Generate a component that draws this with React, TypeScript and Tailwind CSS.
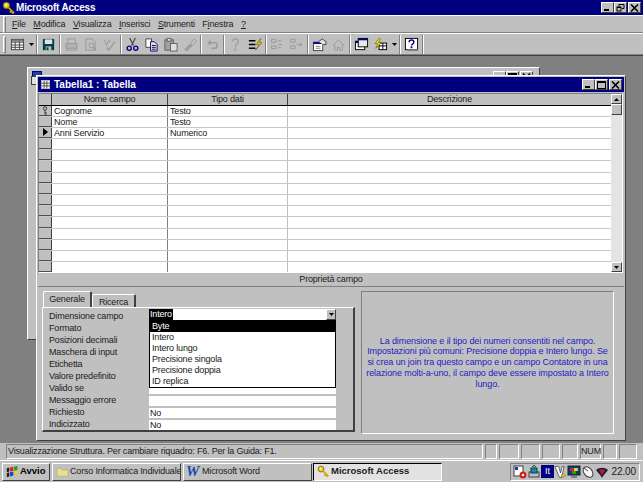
const font = "font-['Liberation_Sans',Arial,sans-serif]";

const raised = "border border-t-white border-l-white border-r-[#404040] border-b-[#404040]";
const sunken = "border border-t-[#808080] border-l-[#808080] border-r-white border-b-white";
const body = "text-[9px] tracking-[-0.18px] text-[#202020]";

function Key({ className = "w-4 h-4" }: { className?: string }) {
  return (
    <svg viewBox="0 0 16 16" className={className}>
      <circle cx="5" cy="5" r="3.6" fill="#e8d020" stroke="#806000" strokeWidth="1" />
      <circle cx="4.5" cy="4.5" r="1" fill="#fff" />
      <path d="M7.5 7.5 L14 14 M11 11 l-2 2 M13 13 l-2 1" stroke="#c8a800" strokeWidth="2" fill="none" />
    </svg>
  );
}

function WinButtons({ restore }: { restore?: boolean }) {
  const box = `${raised} bg-[#c0c0c0] flex items-center justify-center w-[13px] h-[11px]`;
  return (
    <div className="flex items-center">
      <div className={box}>
        <svg viewBox="0 0 9 7" className="w-[9px] h-[7px]"><rect x="1" y="5" width="5" height="2" fill="#000" /></svg>
      </div>
      <div className={box}>
        {restore ? (
          <svg viewBox="0 0 9 8" className="w-[9px] h-[8px]" fill="none" stroke="#000">
            <path d="M3 2.500V.5h5v4H6" /><rect x="1" y="3" width="4" height="4" />
            <path d="M1 3.500h4" />
          </svg>
        ) : (
          <svg viewBox="0 0 9 8" className="w-[9px] h-[8px]" fill="none" stroke="#000">
            <rect x=".5" y=".5" width="8" height="7" /><path d="M0 1.500h9" />
          </svg>
        )}
      </div>
      <div className={`${box} ml-[1px]`}>
        <svg viewBox="0 0 9 8" className="w-[9px] h-[8px]" stroke="#000" strokeWidth="1.6"><path d="M1 .5l7 7M8 .5l-7 7" /></svg>
      </div>
    </div>
  );
}

function Sep() {
  return <div className="w-[2px] h-[19px] mx-[1px] shrink-0 border-l border-l-[#808080] border-r border-r-white" />;
}

function Tool({ children, w = "w-[19px]" }: { children: React.ReactNode; w?: string }) {
  return <div className={`${w} h-[19px] flex items-center justify-center shrink-0`}>{children}</div>;
}

function Ico({ children }: { children: React.ReactNode }) {
  return <svg viewBox="0 0 16 16" className="w-[15px] h-[15px]">{children}</svg>;
}

function Caret() {
  return (
    <svg viewBox="0 0 5 3" className="w-[5px] h-[3px]"><path d="M0 0h5L2.500 3z" fill="#000" /></svg>
  );
}

function Grip() {
  return <div className="w-[3px] h-[17px] ml-[1px] mr-[1px] shrink-0 border border-t-white border-l-white border-r-[#808080] border-b-[#808080]" />;
}

function Toolbar() {
  const off = "#989898";
  return (
    <div className="h-[22px] shrink-0 bg-[#c0c0c0] flex items-center pl-[2px] border-b border-b-[#808080] border-t border-t-white">
      <Grip />
      <Tool w="w-[20px]">
        <Ico>
          <rect x="1.500" y="2.500" width="13" height="11" fill="#fff" stroke="#404040" />
          <path d="M1.500 5.500h13M1.500 8.500h13M1.500 11h13M5.500 3v10M10 3v10" stroke="#404040" />
          <rect x="2" y="3" width="12" height="2" fill="#808080" />
        </Ico>
      </Tool>
      <Tool w="w-[8px]"><Caret /></Tool>
      <Sep />
      <Tool>
        <Ico>
          <rect x="2" y="2" width="12" height="12" fill="#004040" />
          <rect x="4" y="2.500" width="8" height="5" fill="#e0e0e0" />
          <rect x="5" y="10" width="6" height="4" fill="#c0c0c0" />
          <rect x="6" y="11" width="2" height="3" fill="#004040" />
        </Ico>
      </Tool>
      <Sep />
      <Tool>
        <Ico>
          <path d="M4 7V2h8v5" fill="none" stroke={off} />
          <path d="M2 7h12v5H2z" fill="#b0b0b0" stroke={off} />
          <path d="M4 12l-1 2h10l-1-2" fill="none" stroke={off} />
        </Ico>
      </Tool>
      <Tool>
        <Ico>
          <path d="M3 2h7l3 3v9H3z" fill="none" stroke={off} />
          <circle cx="9" cy="9" r="2.500" fill="none" stroke={off} />
          <path d="M11 11l3 3" stroke={off} strokeWidth="1.500" />
        </Ico>
      </Tool>
      <Tool>
        <Ico>
          <path d="M2 3l3 6 2-6M9 3l-1 3" fill="none" stroke={off} />
          <path d="M5 11l2 3 7-9" fill="none" stroke={off} strokeWidth="1.500" />
        </Ico>
      </Tool>
      <Sep />
      <Tool>
        <Ico>
          <path d="M5 1l4 8M11 1L7 9" stroke="#404040" fill="none" strokeWidth="1.200" />
          <circle cx="4.500" cy="12" r="2.200" fill="none" stroke="#000080" strokeWidth="1.400" />
          <circle cx="11.500" cy="12" r="2.200" fill="none" stroke="#000080" strokeWidth="1.400" />
        </Ico>
      </Tool>
      <Tool>
        <Ico>
          <path d="M2 2h6v9H2z" fill="#fff" stroke="#404040" />
          <path d="M7 5h4l3 3v7H7z" fill="#e8e8c8" stroke="#000080" />
          <path d="M8.500 9h4M8.500 11h4M8.500 13h4" stroke="#000080" />
        </Ico>
      </Tool>
      <Tool>
        <Ico>
          <rect x="2" y="3" width="9" height="11" fill="#a0a0a0" stroke="#606060" />
          <rect x="4.500" y="1.500" width="4" height="3" fill="#e0e0e0" stroke="#606060" />
          <rect x="8" y="7" width="7" height="8" fill="#e0e0e0" stroke="#606060" />
        </Ico>
      </Tool>
      <Tool>
        <Ico>
          <path d="M3 13l6-6 2 2-6 6z" fill="#a0a0a0" stroke={off} />
          <path d="M9 7l4-5 2 2-4 5z" fill="#c8c8c8" stroke={off} />
        </Ico>
      </Tool>
      <Sep />
      <Tool>
        <Ico>
          <path d="M4 6h6a3 3 0 0 1 0 6H7" fill="none" stroke={off} strokeWidth="1.500" />
          <path d="M6 3L2.500 6 6 9z" fill={off} />
        </Ico>
      </Tool>
      <Sep />
      <Tool>
        <Ico>
          <path d="M5 5a3 3 0 1 1 5 2l-2 2v2" fill="none" stroke={off} strokeWidth="1.300" />
          <rect x="7" y="12.500" width="2" height="2" fill={off} />
        </Ico>
      </Tool>
      <Tool>
        <Ico>
          <path d="M2 4h7M2 8h7M2 12h7" stroke="#000" strokeWidth="1.400" />
          <path d="M14 2l-4 6h3l-4 6 7-8h-3l2-4z" fill="#e0d000" stroke="#404000" strokeWidth=".5" />
        </Ico>
      </Tool>
      <Sep />
      <Tool>
        <Ico>
          <path d="M1.500 2.500h5v3h-5zM1.500 9.500h5v3h-5z" fill="none" stroke={off} />
          <path d="M9 4h3M9 8h4M9 11h3" stroke={off} />
        </Ico>
      </Tool>
      <Tool>
        <Ico>
          <path d="M1.500 2.500h5v3h-5zM1.500 9.500h5v3h-5z" fill="none" stroke={off} />
          <path d="M8 8h5M11 6l3 2-3 2" stroke={off} fill="none" />
        </Ico>
      </Tool>
      <Sep />
      <Tool>
        <Ico>
          <rect x="1.500" y="5.500" width="10" height="9" fill="#fff" stroke="#404040" />
          <rect x="1.500" y="5.500" width="10" height="2" fill="#000080" />
          <path d="M7 5l4-3 4 3v3h-3" fill="#e0e0e0" stroke="#404040" />
          <path d="M4 10h5M4 12h5" stroke="#808080" />
        </Ico>
      </Tool>
      <Tool>
        <Ico>
          <path d="M2 9l6-6 6 6M4 8v6h3v-3h2v3h3V8" fill="none" stroke={off} />
        </Ico>
      </Tool>
      <Sep />
      <Tool>
        <Ico>
          <rect x="1.500" y="4.500" width="10" height="9" fill="#fff" stroke="#000" />
          <rect x="4.500" y="1.500" width="10" height="9" fill="#e8e8e8" stroke="#000" />
          <rect x="4.500" y="1.500" width="10" height="2" fill="#000080" />
          <rect x="1.500" y="4.500" width="3" height="2" fill="#000080" />
        </Ico>
      </Tool>
      <Tool>
        <Ico>
          <rect x="6.500" y="6.500" width="8" height="7" fill="#fff" stroke="#000" />
          <path d="M6.500 9.500h8M10.500 6.500v7" stroke="#000" />
          <path d="M7 1L2 7h3L3 12l6-6H6l2-4z" fill="#f0e000" stroke="#404000" strokeWidth=".5" />
        </Ico>
      </Tool>
      <Tool w="w-[8px]"><Caret /></Tool>
      <Sep />
      <Tool>
        <Ico>
          <rect x="1.500" y="1.500" width="13" height="12" fill="#fff" stroke="#000" />
          <rect x="3" y="13" width="12" height="2" fill="#808080" />
          <path d="M5.500 5.500c0-3 5-3 5 0 0 2-2.500 2-2.500 3.500" fill="none" stroke="#000080" strokeWidth="1.500" />
          <rect x="7" y="10" width="2" height="2" fill="#000080" />
        </Ico>
      </Tool>
      <Sep />
    </div>
  );
}

function u(text: string, i: number) {
  return (
    <>
      {text.slice(0, i)}
      <span className="underline">{text[i]}</span>
      {text.slice(i + 1)}
    </>
  );
}

const menus: [string, number][] = [
  ["File", 0], ["Modifica", 0], ["Visualizza", 0], ["Inserisci", 0], ["Strumenti", 0], ["Finestra", 1], ["?", 0],
];

const rows = [
  ["Cognome", "Testo"],
  ["Nome", "Testo"],
  ["Anni Servizio", "Numerico"],
  ...Array.from({ length: 12 }, () => ["", ""]),
];

const props = ["Dimensione campo", "Formato", "Posizioni decimali", "Maschera di input", "Etichetta", "Valore predefinito", "Valido se", "Messaggio errore", "Richiesto", "Indicizzato"];
const options = ["Byte", "Intero", "Intero lungo", "Precisione singola", "Precisione doppia", "ID replica"];

function ChildTitle() {
  return (
    <div className="h-[15px] bg-[#000080] flex items-center justify-between pl-[3px] pr-[2px] mb-[1px]">
      <div className="flex items-center gap-[4px]">
        <svg viewBox="0 0 10 10" className="w-[9px] h-[9px]">
          <rect x=".5" y=".5" width="9" height="9" fill="#fff" stroke="#c0c0c0" />
          <path d="M.5 3.500h9M.5 6.500h9M3.500 1v8M6.500 1v8" stroke="#404040" />
        </svg>
        <span className="text-white font-bold text-[10px]">Tabella1 : Tabella</span>
      </div>
      <WinButtons />
    </div>
  );
}

function ScrollBtn({ d }: { d: string }) {
  return (
    <div className={`${raised} h-[10px] bg-[#c0c0c0] flex items-center justify-center`}>
      <svg viewBox="0 0 5 3" className="w-[5px] h-[3px]"><path d={d} fill="#000" /></svg>
    </div>
  );
}

function DesignGrid() {
  return (
    <div className={`${sunken} mr-[1px] flex bg-white h-[180px] overflow-hidden border-t-[#404040] border-l-[#404040]`}>
      <div className="flex-1 min-w-0">
        <div className={`grid grid-cols-[13px_116px_120px_1fr] h-[11.5px] bg-[#c0c0c0] border-b border-b-black ${body} leading-[10px] text-center`}>
          <div className="border-r border-r-[#404040]" />
          <div className="border-r border-r-[#404040]">Nome campo</div>
          <div className="border-r border-r-[#404040]">Tipo dati</div>
          <div>Descrizione</div>
        </div>
        {rows.map((r, i) => (
          <div key={i} className={`grid grid-cols-[13px_116px_120px_1fr] h-[11.2px] border-b border-b-[#c8c8c8] ${body} leading-[10px]`}>
            <div className="bg-[#c0c0c0] border-r border-r-[#404040] border-b border-b-[#505050] flex items-center justify-center">
              {i === 0 && (
                <svg viewBox="0 0 7 10" className="w-[6px] h-[9px]" fill="none" stroke="#303030">
                  <circle cx="3.500" cy="2.500" r="2" /><path d="M3.500 4.500V9.500M3.500 7.500h2M3.500 9.500h2" />
                </svg>
              )}
              {i === 2 && <svg viewBox="0 0 5 8" className="w-[5px] h-[8px]"><path d="M0 0l5 4-5 4z" fill="#000" /></svg>}
            </div>
            <div className="pl-[2px] border-r border-r-[#808080]">{r[0]}</div>
            <div className="pl-[2px] border-r border-r-[#c0c0c0]">{r[1]}</div>
            <div />
          </div>
        ))}
      </div>
      <div className="w-[11px] shrink-0 bg-[#e4e4e4] flex flex-col justify-between">
        <div>
          <ScrollBtn d="M0 3h5L2.500 0z" />
          <div className={`${raised} h-[11px] bg-[#c0c0c0]`} />
        </div>
        <ScrollBtn d="M0 0h5L2.500 3z" />
      </div>
    </div>
  );
}

function PropertyTabs() {
  return (
    <div className="w-[313px] flex flex-col">
      <div className="flex items-end h-[15px] pl-[1px] relative z-10">
        <div className={`h-[16px] w-[49px] bg-[#c0c0c0] border-t border-l border-t-white border-l-white border-r-[2px] border-r-[#404040] rounded-t-[2px] text-center ${body} leading-[14px]`}>Generale</div>
        <div className={`h-[13px] w-[44px] bg-[#c0c0c0] border-t border-l border-t-white border-l-white border-r-[2px] border-r-[#404040] rounded-t-[2px] text-center ${body} leading-[14px]`}>Ricerca</div>
      </div>
      <div className={`${raised} border-r-[2px] border-b-[2px] h-[125px] pl-[6px] pt-[3px] relative`}>
        {props.map((p, i) => (
          <div key={p} className={`flex h-[12px] items-center ${body}`}>
            <div className="w-[100px] shrink-0 whitespace-nowrap">{p}</div>
            <div className="w-[187px] h-[10.5px] pl-[1px] leading-[10.5px] bg-white">
              {i >= 8 ? "No" : ""}
            </div>
          </div>
        ))}
        {/* menu a tendina aperto sopra le righe */}
        <div className="absolute left-[106px] top-[1px] w-[187px]">
          <div className={`h-[11px] bg-white flex justify-between ${body} leading-[11px]`}>
            <span className="bg-black text-white px-[1px]">Intero</span>
            <div className={`${raised} w-[10px] h-[11px] bg-[#c0c0c0] flex items-center justify-center`}><Caret /></div>
          </div>
          <div className={`border border-black bg-white ${body} h-[68px]`}>
            {options.map((o, i) => (
              <div key={o} className={`h-[11.100px] leading-[11px] pl-[2px] ${i === 0 ? "bg-black text-white" : ""}`}>{o}</div>
            ))}
          </div>
        </div>
      </div>
    </div>
  );
}

function HelpPanel() {
  return (
    <div className={`${sunken} w-[253px] h-[143px] -mt-[1px] flex items-center justify-center text-center text-[9px] tracking-[-0.1px] leading-[10.7px] text-[#1c1cc8] whitespace-nowrap`}>
      <p>
        La dimensione e il tipo dei numeri consentiti nel campo.<br />
        Impostazioni più comuni: Precisione doppia e Intero lungo. Se<br />
        si crea un join tra questo campo e un campo Contatore in una<br />
        relazione molti-a-uno, il campo deve essere impostato a Intero<br />
        lungo.
      </p>
    </div>
  );
}

function TableWindow() {
  return (
    <div className={`absolute left-[36px] top-[19px] w-[590px] h-[366px] bg-[#c0c0c0] ${raised} p-[1px]`}>
      <ChildTitle />
      <DesignGrid />
      <div className={`h-[14px] border-b border-b-[#808080] text-center ${body} leading-[13px]`}>Proprietà campo</div>
      <div className="flex gap-[6px] pl-[4px] pt-[5px]">
        <PropertyTabs />
        <HelpPanel />
      </div>
    </div>
  );
}

function Workspace() {
  return (
    <div className="relative flex-1 bg-[#808080] border-t border-t-[#404040] overflow-hidden">
      {/* finestra database dietro */}
      <div className={`absolute left-[27px] top-[11px] w-[513px] h-[273px] bg-[#c0c0c0] ${raised} border-t-[#e0dccc]`}>
        <div className="h-[14px] m-[1px] flex items-start justify-between pr-[5px] pt-[2px] pl-[2px]">
          <svg viewBox="0 0 12 14" className="w-[12px] h-[14px]">
            <rect x="1.500" y=".5" width="9" height="5" fill="#2040a0" stroke="#000080" />
            <rect x=".5" y="5.500" width="7" height="8" fill="#e0e0e0" stroke="#404040" />
          </svg>
          <WinButtons />
        </div>
      </div>
      <TableWindow />
    </div>
  );
}

function StatusBar() {
  const cell = `${sunken} h-[15px]`;
  return (
    <div className={`h-[17px] shrink-0 bg-[#c0c0c0] flex items-center gap-[2px] ${body} pl-[6px]`}>
      <div className={`${cell} w-[477px] leading-[13px] pl-[1px] whitespace-nowrap`}>
        Visualizzazione Struttura. Per cambiare riquadro: F6. Per la Guida: F1.
      </div>
      <div className={`${cell} w-[12px]`} />
      <div className={`${cell} w-[20px]`} />
      <div className={`${cell} w-[19px]`} />
      <div className={`${cell} w-[18px]`} />
      <div className={`${cell} w-[16px]`} />
      <div className={`${cell} w-[21px] text-center leading-[13px]`}>NUM</div>
      <div className={`${cell} w-[14px]`} />
      <div className={`${cell} w-[18px]`} />
    </div>
  );
}

function TaskButton({ children, w, active }: { children: React.ReactNode; w: string; active?: boolean }) {
  return (
    <div className={`${w} h-[18px] shrink-0 flex items-center whitespace-nowrap overflow-hidden ${active ? `${sunken} border-t-black border-l-black bg-[#e2e2e2]` : `${raised} bg-[#c0c0c0]`}`}>
      {children}
    </div>
  );
}

function Taskbar() {
  return (
    <div className="h-[22px] shrink-0 bg-[#c0c0c0] border-t border-t-white flex items-center pl-[2px]">
      <TaskButton w="w-[48px]">
        <svg viewBox="0 0 16 16" className="w-[13px] h-[13px] shrink-0 ml-[3px] mr-[1px]">
          <path d="M1 4l3-1v5l-3 1zM1 10l3-1v5l-3 1z" fill="#202020" />
          <path d="M5 3l4-1v5L5 8z" fill="#e02020" />
          <path d="M10 2l4-1v5l-4 1z" fill="#20a020" />
          <path d="M5 9l4-1v5l-4 1z" fill="#2040d0" />
          <path d="M10 8l4-1v5l-4 1z" fill="#e8d020" />
        </svg>
        <span className="font-bold text-black text-[9.500px]">Avvio</span>
      </TaskButton>
      <div className="w-[2px]" />
      <TaskButton w="w-[129px]">
        <svg viewBox="0 0 16 14" className="w-[13px] h-[11px] shrink-0 ml-[3px] mr-[1px]">
          <path d="M1 3h5l1 2h8v8H1z" fill="#e8e090" stroke="#a0a060" strokeWidth=".6" />
        </svg>
        <span className={body}>Corso Informatica Individuale</span>
      </TaskButton>
      <div className="w-[2px]" />
      <TaskButton w="w-[129px]">
        <span className="font-['Liberation_Serif',serif] italic font-bold text-[15px] leading-[15px] text-[#1848b0] w-[14px] shrink-0 ml-[2px] mr-[2px]">W</span>
        <span className={body}>Microsoft Word</span>
      </TaskButton>
      <div className="w-[1px]" />
      <TaskButton w="w-[129px]" active>
        <Key className="w-[13px] h-[13px] shrink-0 ml-[3px] mr-[1px]" />
        <span className="font-bold text-[9.500px] text-[#202020]">Microsoft Access</span>
      </TaskButton>
      <div className={`${sunken} ml-auto mr-[3px] h-[18px] w-[130px] flex items-center pl-[2px]`}>
        <Tray />
        <span className="ml-auto pr-[3px] text-[10px] tracking-[-0.1px] text-[#202020]">22.00</span>
      </div>
    </div>
  );
}

function Tray() {
  return (
    <>
      <svg viewBox="0 0 14 14" className="w-[14px] h-[14px] shrink-0">
        <rect x="1" y="1" width="9" height="10" fill="#fff" stroke="#404040" />
        <rect x="2" y="2" width="3" height="3" fill="#2040a0" />
        <circle cx="10" cy="10" r="3.500" fill="#d02020" />
        <circle cx="10" cy="10" r="1.200" fill="#fff" />
      </svg>
      <svg viewBox="0 0 14 14" className="w-[14px] h-[14px] shrink-0">
        <rect x="2" y="7" width="10" height="5" fill="#c0c0c0" stroke="#404040" />
        <rect x="4" y="3" width="6" height="5" fill="#2080c0" stroke="#004040" />
        <path d="M7 0v4M5 2l2-2 2 2" stroke="#208020" fill="none" />
      </svg>
      <div className="w-[13px] h-[13px] bg-[#000080] text-white text-[9px] leading-[13px] text-center shrink-0">It</div>
      <svg viewBox="0 0 14 14" className="w-[13px] h-[14px] shrink-0">
        <path d="M1 1h4l2 7 2-7h2l-3 12H6z" fill="#fff" stroke="#404040" strokeWidth=".8" />
        <path d="M9 8l4 3-4 2z" fill="#e8d020" stroke="#806000" strokeWidth=".5" />
      </svg>
      <svg viewBox="0 0 14 14" className="w-[14px] h-[14px] shrink-0">
        <rect x="1" y="1" width="12" height="9" fill="#004080" stroke="#202020" />
        <rect x="3" y="3" width="4" height="3" fill="#e02020" />
        <rect x="7" y="3" width="4" height="3" fill="#e8d020" />
        <rect x="5" y="6" width="4" height="3" fill="#20a020" />
        <rect x="4" y="11" width="6" height="2" fill="#808080" />
      </svg>
      <svg viewBox="0 0 14 14" className="w-[14px] h-[14px] shrink-0">
        <ellipse cx="7" cy="7" rx="4" ry="6" transform="rotate(-40 7 7)" fill="#f4f4f4" stroke="#404040" />
        <path d="M3 3l4 3" stroke="#404040" />
      </svg>
      <svg viewBox="0 0 14 14" className="w-[14px] h-[14px] shrink-0">
        <path d="M1 5c3-3 9-3 12 0-2 3-4 4-6 8-2-4-4-5-6-8z" fill="#202040" />
        <path d="M4 5c2-1 4-1 6 0-1 2-2 3-3 5-1-2-2-3-3-5z" fill="#d01030" />
      </svg>
    </>
  );
}

export default function App() {
  return (
    <div className={`${font} w-[643px] h-[482px] flex flex-col bg-[#c0c0c0] overflow-hidden`}>
      <div className="h-[15px] bg-[#000080] flex items-center justify-between pl-[2px] pr-[2px] shrink-0">
        <div className="flex items-center">
          <Key className="w-[14px] h-[14px]" />
          <span className="text-white font-bold text-[10px] tracking-[-0.2px]">Microsoft Access</span>
        </div>
        <WinButtons restore />
      </div>
      <div className="h-[18px] flex items-center pl-[2px] border-t border-t-white border-b border-b-[#808080] shrink-0">
        <Grip />
        <div className={`flex gap-[7.500px] pl-[5px] pt-[1px] ${body}`}>
          {menus.map(([m, i]) => <span key={m}>{u(m, i)}</span>)}
        </div>
      </div>
      <Toolbar />
      <Workspace />
      <StatusBar />
      <Taskbar />
    </div>
  );
}
